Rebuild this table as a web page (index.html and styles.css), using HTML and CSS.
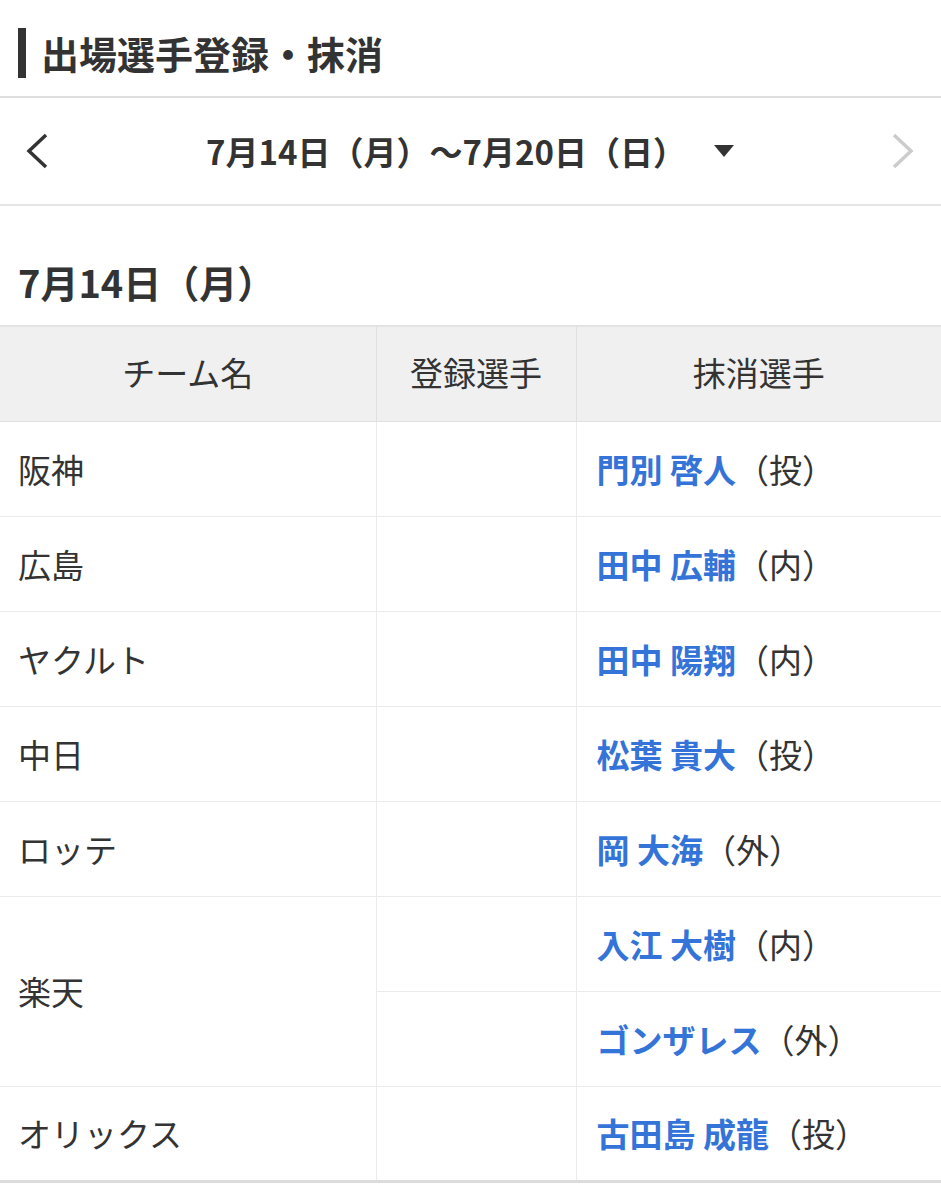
FILE: index.html
```html
<!DOCTYPE html>
<html lang="ja">
<head>
<meta charset="utf-8">
<link rel="stylesheet" href="styles.css">
</head>
<body>
<div class="page">
  <header class="title-bar">
    <h1 class="title">出場選手登録・抹消</h1>
  </header>
  <nav class="week-nav">
    <span class="arrow prev">
      <svg width="26" height="40" viewBox="0 0 26 40"><path d="M22 4 L5 20 L22 36" fill="none" stroke="#333" stroke-width="3.5"/></svg>
    </span>
    <div class="week-label">7月14日（月）～7月20日（日）<span class="caret"></span></div>
    <span class="arrow next">
      <svg width="26" height="40" viewBox="0 0 26 40"><path d="M4 4 L21 20 L4 36" fill="none" stroke="#ccc" stroke-width="3.5"/></svg>
    </span>
  </nav>
  <h2 class="day">7月14日（月）</h2>
  <table class="roster">
    <colgroup><col class="c1"><col class="c2"><col class="c3"></colgroup>
    <thead>
      <tr><th>チーム名</th><th>登録選手</th><th>抹消選手</th></tr>
    </thead>
    <tbody>
      <tr><td>阪神</td><td></td><td><a class="name">門別 啓人</a><span class="pos">（投）</span></td></tr>
      <tr><td>広島</td><td></td><td><a class="name">田中 広輔</a><span class="pos">（内）</span></td></tr>
      <tr><td>ヤクルト</td><td></td><td><a class="name">田中 陽翔</a><span class="pos">（内）</span></td></tr>
      <tr><td>中日</td><td></td><td><a class="name">松葉 貴大</a><span class="pos">（投）</span></td></tr>
      <tr><td>ロッテ</td><td></td><td><a class="name">岡 大海</a><span class="pos">（外）</span></td></tr>
      <tr><td rowspan="2">楽天</td><td></td><td><a class="name">入江 大樹</a><span class="pos">（内）</span></td></tr>
      <tr><td></td><td><a class="name">ゴンザレス</a><span class="pos">（外）</span></td></tr>
      <tr><td>オリックス</td><td></td><td><a class="name">古田島 成龍</a><span class="pos">（投）</span></td></tr>
    </tbody>
  </table>
</div>
</body>
</html>
```
FILE: styles.css
```css
* { box-sizing: border-box; }
html, body { margin: 0; padding: 0; background: #fff; }
body {
  font-family: "Noto Sans CJK JP", "Noto Sans", sans-serif;
  color: #333;
  width: 941px;
}
.title-bar {
  height: 98px;
  padding: 28px 0 0 18px;
  border-bottom: 2px solid #dedede;
}
.title {
  margin: 0;
  border-left: 8px solid #333;
  padding-left: 15px;
  height: 50px;
  font-size: 38px;
  font-weight: 700;
  line-height: 50px;
  color: #333;
}
.week-nav {
  height: 108px;
  display: flex;
  align-items: center;
  justify-content: space-between;
  padding: 0 25px 0 24px;
  border-bottom: 2px solid #e6e6e6;
}
.arrow { display: flex; align-items: center; }
.week-label {
  display: flex;
  align-items: center;
  font-size: 33px;
  font-weight: 700;
  color: #333;
  margin-left: 0;
}
.caret {
  display: inline-block;
  width: 0; height: 0;
  border-left: 10px solid transparent;
  border-right: 10px solid transparent;
  border-top: 12px solid #333;
  margin-left: 28px;
}
.day {
  margin: 0;
  padding: 52px 0 0 18px;
  height: 119px;
  font-size: 38px;
  font-weight: 700;
  line-height: 48px;
  color: #333;
}
.roster {
  width: 941px;
  border-collapse: collapse;
  table-layout: fixed;
  border-top: 2px solid #e3e3e3;
  border-bottom: 3px solid #dcdcdc;
}
.c1 { width: 376px; }
.c2 { width: 200px; }
.c3 { width: 365px; }
.roster th, .roster td {
  border: 1px solid #ebebeb;
  height: 95px;
  font-size: 33px;
  padding: 0 0 0 18px;
  vertical-align: middle;
}
.roster th:first-child, .roster td:first-child { border-left: none; }
.roster th:last-child, .roster td:last-child { border-right: none; }
.roster th {
  background: #f0f0f0;
  font-weight: 400;
  text-align: center;
  padding: 0 0 4px;
  border-color: #e0e0e0;
}
.roster td { text-align: left; color: #333; }
.roster td:nth-child(3), .roster tr td:nth-child(2):last-child { padding-left: 20px; }
.name { color: #3474d8; font-weight: 700; text-decoration: none; }
.pos { color: #333; }
```
